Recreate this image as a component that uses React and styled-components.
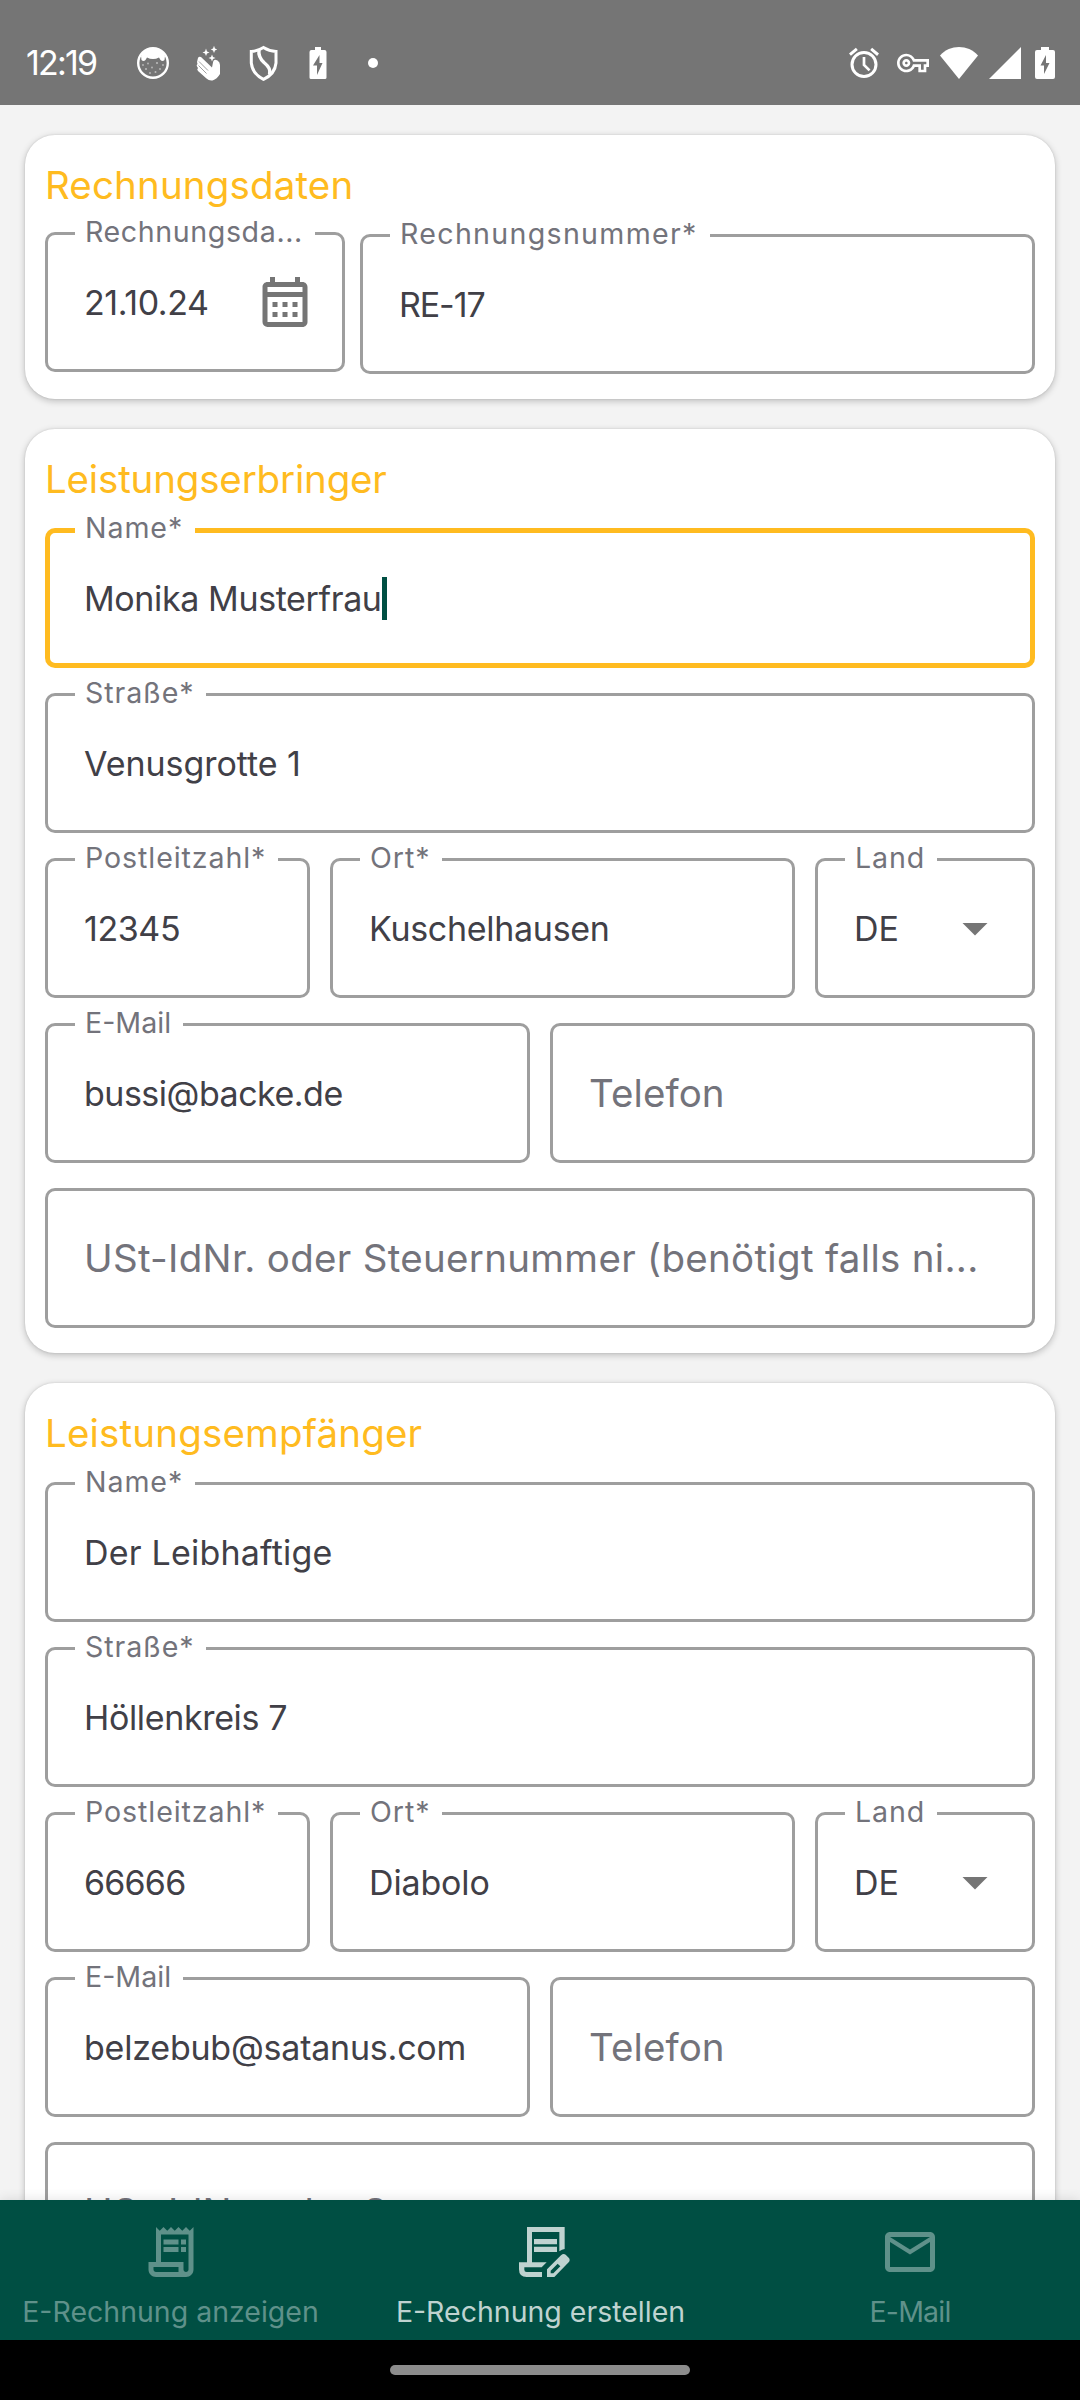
import React from 'react';
import styled, { createGlobalStyle } from 'styled-components';

const color = {
  page: '#f3f3f3',
  status: '#757575',
  accent: '#ffbb20',
  outline: '#9e9e9e',
  icon: '#757575',
  label: '#73737b',
  text: '#414047',
  brand: '#004f43',
};

const GlobalStyle = createGlobalStyle`
  *, *::before, *::after { box-sizing: border-box; }
  body {
    margin: 0;
    background: ${color.page};
    font-family: Inter, "Open Sans", sans-serif;
  }
`;

const Screen = styled.div`
  display: flex;
  flex-direction: column;
  width: 1080px;
  height: 2400px;
  overflow: hidden;
  background: ${color.page};
`;

const StatusBar = styled.header`
  display: flex;
  flex: none;
  align-items: center;
  justify-content: space-between;
  height: 105px;
  padding: 20px 25px 0 26px;
  background: ${color.status};
  color: #fff;
`;

const StatusGroup = styled.div`
  display: flex;
  align-items: center;
`;

const Clock = styled.span`
  width: 109px;
  font-size: 34px;
  line-height: 40px;
  letter-spacing: -1.8px;
  white-space: nowrap;
`;

const StatusIcon = styled.svg`
  display: block;
  width: ${(p) => p.$w}px;
  height: ${(p) => p.$h || p.$w}px;
  margin-right: ${(p) => p.$after || 0}px;
  fill: currentColor;
`;

const MoreDot = styled.span`
  width: 10px;
  height: 10px;
  margin-left: 32px;
  border-radius: 50%;
  background: #fff;
`;

const Content = styled.main`
  display: flex;
  flex: 1;
  flex-direction: column;
  gap: 30px;
  min-height: 0;
  padding: 30px 25px 0;
  overflow: hidden;
`;

const Card = styled.section`
  display: flex;
  flex: none;
  flex-direction: column;
  gap: 25px;
  padding: 26px 20px 25px;
  border-radius: 30px;
  background: #fff;
  box-shadow: 0 2px 7px rgba(0, 0, 0, 0.23), 0 0 2px rgba(0, 0, 0, 0.12);
`;

const CardTitle = styled.h2`
  margin: 0;
  color: ${color.accent};
  font-size: 38.5px;
  font-weight: 400;
  line-height: 48px;
  letter-spacing: ${(p) => p.$track || 0}px;
  white-space: nowrap;
`;

const Row = styled.div`
  display: grid;
  grid-template-columns: ${(p) => p.$columns || '1fr'};
  gap: ${(p) => p.$gap || 20}px;
  height: 140px;
`;

const FieldBox = styled.div`
  position: relative;
  display: flex;
  align-items: center;
  justify-content: space-between;
  height: 140px;
  margin-top: ${(p) => (p.$raised ? -2 : 0)}px;
  padding: 0 30px 0 39px;
  border-radius: 10px;
  box-shadow: inset 0 0 0
    ${(p) => (p.$focused ? `5px ${color.accent}` : `3px ${color.outline}`)};
`;

const FieldLabel = styled.span`
  position: absolute;
  top: -15px;
  left: 30px;
  padding: 0 12px 0 10px;
  background: #fff;
  color: ${color.label};
  font-size: 28.6px;
  line-height: 30px;
  letter-spacing: ${(p) => p.$track || 0}px;
  white-space: nowrap;
`;

const Value = styled.span`
  display: flex;
  align-items: center;
  color: ${color.text};
  font-size: 34px;
  line-height: 43px;
  letter-spacing: ${(p) => p.$track || 0}px;
  white-space: pre;
`;

const Placeholder = styled(Value)`
  color: ${color.label};
  font-size: 38.5px;
`;

const Caret = styled.span`
  width: 5px;
  height: 43px;
  background: ${color.brand};
`;

const FieldIcon = styled.svg`
  display: block;
  flex: none;
  width: 60px;
  height: 60px;
  fill: ${color.icon};
`;

const BottomNav = styled.nav`
  position: relative;
  display: grid;
  flex: none;
  grid-template-columns: 341px 399px 340px;
  height: 140px;
  background: ${color.brand};
  box-shadow: 0 0 12px rgba(0, 0, 0, 0.12);
`;

const Tab = styled.div`
  display: flex;
  flex-direction: column;
  align-items: center;
  gap: 13px;
  padding-top: 22px;
  color: ${(p) => (p.$active ? '#bfd3d0' : '#5f918a')};
`;

const TabIcon = styled.svg`
  display: block;
  width: 60px;
  height: 60px;
  fill: currentColor;
`;

const TabLabel = styled.span`
  font-size: 28.5px;
  line-height: 34px;
  letter-spacing: ${(p) => p.$track || 0}px;
  white-space: nowrap;
`;

const GestureBar = styled.footer`
  display: flex;
  flex: none;
  align-items: center;
  justify-content: center;
  height: 60px;
  background: #000;
`;

const GestureHandle = styled.span`
  width: 300px;
  height: 10px;
  border-radius: 5px;
  background: #8c8c8c;
`;

function CatIcon() {
  return (
    <StatusIcon $w={36} $after={19} viewBox="0 0 36 36">
      <circle cx="18" cy="18" r="14.8" fill="none" stroke="#fff" strokeWidth="2.4" />
      <path d="M6 11Q10 3 18 3Q26 3 30 11L29.500 15Q27.500 17 25.500 15L24 12.500Q21 14 18 14Q15 14 12 12.500L10.500 15Q8.500 17 6.500 15Z" />
      <g opacity=".5">
        <circle cx="8" cy="20" r=".9" />
        <circle cx="13" cy="18.500" r=".9" />
        <circle cx="22" cy="18" r="1.100" />
        <circle cx="28" cy="20" r=".9" />
        <circle cx="11" cy="24" r="1.100" />
        <circle cx="17" cy="22.500" r=".9" />
        <circle cx="25" cy="24" r=".9" />
        <circle cx="15" cy="28" r=".9" />
        <circle cx="20.500" cy="27" r="1" />
      </g>
    </StatusIcon>
  );
}

function HandIcon() {
  return (
    <StatusIcon $w={36} $after={19} viewBox="0 0 36 36">
      <path d="M7.500 15Q8 10.500 11 12L22 22.500L23.200 16.500Q24 13.500 27.500 15.500Q30 17 30 20V29Q27 34 22.500 35.500Q19 36 16.500 33.500L8 26Q6.500 24.500 8 23L7 21.500Q6 20 7.500 19Q6.500 17 7.500 15Z" />
      <path d="M9 16.500L18 25.500M8.500 20.500L16.500 28.500" stroke="#757575" strokeWidth=".7" />
      <path d="M16 3.500L17 6.500L19.500 7.500L17 8.500L16 11L15 8.500L12.500 7.500L15 6.500ZM24 .8L25 3.500L27.200 4.500L25 5.500L24 8L23 5.500L20.800 4.500L23 3.500ZM22 9.500L23 12L25.500 13L23 14L22 16.500L21 14L18.500 13L21 12Z" />
    </StatusIcon>
  );
}

function ShieldIcon() {
  return (
    <StatusIcon $w={36} $after={19} viewBox="0 0 36 36">
      <path
        d="M18.500 2.500Q24 6 31 6.500V18Q30 29 18.500 34.300Q7.500 29 6.300 18V6.500Q13 6 18.500 2.500Z"
        fill="none" stroke="#fff" strokeWidth="3"
      />
      <path
        d="M14 5Q13 12 19 17.500Q26.500 23.500 24.500 29.500"
        fill="none" stroke="#fff" strokeWidth="3.400"
      />
    </StatusIcon>
  );
}

function BatteryIcon({ wide }) {
  return (
    <StatusIcon
      $w={wide ? 20 : 36}
      $h={wide ? 32 : 36}
      viewBox={wide ? '0 0 20 32' : '-9.500 -2 36 36'}
    >
      <path
        fillRule="evenodd"
        d={
          wide
            ? 'M6 0H14V3H18Q20 3 20 5V30Q20 32 18 32H2Q0 32 0 30V5Q0 3 2 3H6ZM11 8L5.500 18.500H9V27L14.500 16H11Z'
            : 'M5.500 0H11.500V3H15Q17 3 17 5V30.500Q17 32 15.500 32H1.500Q0 32 0 30.500V5Q0 3 2 3H5.500ZM10 8L3.500 18.500H7.500V28L13 16H10Z'
        }
      />
    </StatusIcon>
  );
}

function AlarmIcon() {
  return (
    <StatusIcon $w={36} $after={15} viewBox="0 0 24 24">
      <path d="M22 5.720l-4.600-3.860-1.290 1.530 4.600 3.860L22 5.720zM7.880 3.390L6.600 1.860 2 5.710l1.290 1.530 4.590-3.850zM12 4a9 9 0 1 0 0 18a9 9 0 0 0 0-18zm0 16a7 7 0 1 1 0-14a7 7 0 0 1 0 14z" />
      <path d="M12 8V13.300L15.700 16.900" fill="none" stroke="#fff" strokeWidth="1.800" />
    </StatusIcon>
  );
}

function KeyIcon() {
  return (
    <StatusIcon $w={32} $after={11} viewBox="0 0 24 24">
      <path d="M22 19h-6v-4h-2.680c-1.140 2.420-3.600 4-6.320 4-3.860 0-7-3.140-7-7s3.140-7 7-7c2.720 0 5.170 1.580 6.320 4H24v6h-2v4zm-4-2h2v-4h2v-2H11.940l-.23-.67C11.010 8.340 9.110 7 7 7c-2.760 0-5 2.240-5 5s2.240 5 5 5c2.110 0 4.010-1.340 4.710-3.330l.23-.67H18v4zM7 15c-1.650 0-3-1.350-3-3s1.350-3 3-3 3 1.350 3 3-1.350 3-3 3zm0-4c-.55 0-1 .45-1 1s.45 1 1 1 1-.45 1-1-.45-1-1-1z" />
    </StatusIcon>
  );
}

function WifiIcon() {
  return (
    <StatusIcon $w={38} $h={32} $after={11} viewBox="0 0 38 32">
      <path d="M0 8.500C10-2.800 28-2.800 38 8.500L19 32Z" />
    </StatusIcon>
  );
}

function SignalIcon() {
  return (
    <StatusIcon $w={32} $after={14} viewBox="0 0 32 32">
      <path d="M32 0V32H0Z" />
    </StatusIcon>
  );
}

function CalendarIcon() {
  return (
    <FieldIcon viewBox="0 0 24 24">
      <path d="M19 4h-1V2h-2v2H8V2H6v2H5c-1.110 0-1.990.9-1.990 2L3 20a2 2 0 0 0 2 2h14c1.100 0 2-.9 2-2V6c0-1.100-.9-2-2-2zm0 16H5V10h14v10zm0-12H5V6h14v2zM9 14H7v-2h2v2zm4 0h-2v-2h2v2zm4 0h-2v-2h2v2zm-8 4H7v-2h2v2zm4 0h-2v-2h2v2zm4 0h-2v-2h2v2z" />
    </FieldIcon>
  );
}

function DropdownIcon() {
  return (
    <FieldIcon viewBox="0 0 24 24">
      <path d="M7 10l5 5 5-5z" />
    </FieldIcon>
  );
}

function ReceiptIcon() {
  return (
    <TabIcon viewBox="0 0 24 24">
      <path d="M19.500 3.500L18 2l-1.500 1.500L15 2l-1.500 1.500L12 2l-1.500 1.500L9 2 7.500 3.500 6 2v14H3v3c0 1.660 1.340 3 3 3h12c1.660 0 3-1.340 3-3V2l-1.500 1.500zM15 20H6c-.55 0-1-.45-1-1v-1h10v2zm4-1c0 .55-.45 1-1 1s-1-.45-1-1v-3H8V5h11v14z" />
      <path d="M9 7h6v2H9zM16 7h2v2h-2zM9 10h6v2H9zM16 10h2v2h-2z" />
    </TabIcon>
  );
}

function ReceiptEditIcon() {
  return (
    <TabIcon viewBox="30 36 180 180">
      <path d="M78 51H191V117Q183 118 175 124V66H93V157H137L122 172H70V179Q70 186 77 186H123V201H77Q54 201 54 178V157H78Z" />
      <path d="M99 87H168V103H99ZM99 110H168V126H99Z" />
      <path fillRule="evenodd" d="M138 201V178L180 136Q187 129 194 134L203 143Q209 149 203 157L160 201ZM149 190H157L178 169L170 161L149 182Z" />
    </TabIcon>
  );
}

function MailIcon() {
  return (
    <TabIcon viewBox="0 0 24 24">
      <path d="M22 6c0-1.100-.9-2-2-2H4c-1.100 0-2 .9-2 2v12c0 1.100.9 2 2 2h16c1.100 0 2-.9 2-2V6zm-2 0l-8 5-8-5h16zm0 12H4V8l8 5 8-5v10z" />
    </TabIcon>
  );
}

function Field({ label, labelTrack = 0.9, value, track, placeholder, focused, raised, icon }) {
  return (
    <FieldBox $focused={focused} $raised={raised}>
      {label && <FieldLabel $track={labelTrack}>{label}</FieldLabel>}
      {placeholder ? (
        <Placeholder $track={track}>{placeholder}</Placeholder>
      ) : (
        <Value $track={track}>
          {value}
          {focused && <Caret />}
        </Value>
      )}
      {icon}
    </FieldBox>
  );
}

function PartyCard({ title, titleTrack, name, street, zip, city, mail, taxHint, focused }) {
  return (
    <Card>
      <CardTitle $track={titleTrack}>{title}</CardTitle>
      <Row>
        <Field label="Name*" value={name.text} track={name.track} focused={focused} />
      </Row>
      <Row>
        <Field label="Straße*" value={street.text} track={street.track} />
      </Row>
      <Row $columns="265px 465px 220px">
        <Field label="Postleitzahl*" value={zip.text} track={zip.track} />
        <Field label="Ort*" value={city.text} track={city.track} />
        <Field label="Land" value="DE" icon={<DropdownIcon />} />
      </Row>
      <Row $columns="485px 485px">
        <Field label="E-Mail" labelTrack={0} value={mail.text} track={mail.track} />
        <Field placeholder="Telefon" track={0.1} />
      </Row>
      <Row>
        <Field placeholder={taxHint} track={0.3} />
      </Row>
    </Card>
  );
}

export default function App() {
  return (
    <>
      <GlobalStyle />
      <Screen>
        <StatusBar>
          <StatusGroup>
            <Clock>12:19</Clock>
            <CatIcon />
            <HandIcon />
            <ShieldIcon />
            <BatteryIcon />
            <MoreDot />
          </StatusGroup>
          <StatusGroup>
            <AlarmIcon />
            <KeyIcon />
            <WifiIcon />
            <SignalIcon />
            <BatteryIcon wide />
          </StatusGroup>
        </StatusBar>
        <Content>
          <Card>
            <CardTitle $track={0.15}>Rechnungsdaten</CardTitle>
            <Row $columns="300px 675px" $gap={15}>
              <Field
                label="Rechnungsda..."
                labelTrack={0.6}
                value="21.10.24"
                track={-0.4}
                raised
                icon={<CalendarIcon />}
              />
              <Field label="Rechnungsnummer*" labelTrack={1.3} value="RE-17" track={-1.1} />
            </Row>
          </Card>
          <PartyCard
            title="Leistungserbringer"
            titleTrack={-0.17}
            name={{ text: 'Monika Musterfrau', track: -0.38 }}
            street={{ text: 'Venusgrotte 1', track: -0.05 }}
            zip={{ text: '12345', track: -0.4 }}
            city={{ text: 'Kuschelhausen', track: -0.3 }}
            mail={{ text: 'bussi@backe.de', track: -0.5 }}
            taxHint="USt-IdNr. oder Steuernummer (benötigt falls ni..."
            focused
          />
          <PartyCard
            title="Leistungsempfänger"
            titleTrack={0.17}
            name={{ text: 'Der Leibhaftige', track: 0.2 }}
            street={{ text: 'Höllenkreis 7', track: -0.35 }}
            zip={{ text: '66666', track: -0.8 }}
            city={{ text: 'Diabolo', track: -0.15 }}
            mail={{ text: 'belzebub@satanus.com', track: -0.22 }}
            taxHint="USt-IdNr. oder Steuernummer"
          />
        </Content>
        <BottomNav>
          <Tab>
            <ReceiptIcon />
            <TabLabel>E-Rechnung anzeigen</TabLabel>
          </Tab>
          <Tab $active>
            <ReceiptEditIcon />
            <TabLabel>E-Rechnung erstellen</TabLabel>
          </Tab>
          <Tab>
            <MailIcon />
            <TabLabel $track={-0.8}>E-Mail</TabLabel>
          </Tab>
        </BottomNav>
        <GestureBar>
          <GestureHandle />
        </GestureBar>
      </Screen>
    </>
  );
}
